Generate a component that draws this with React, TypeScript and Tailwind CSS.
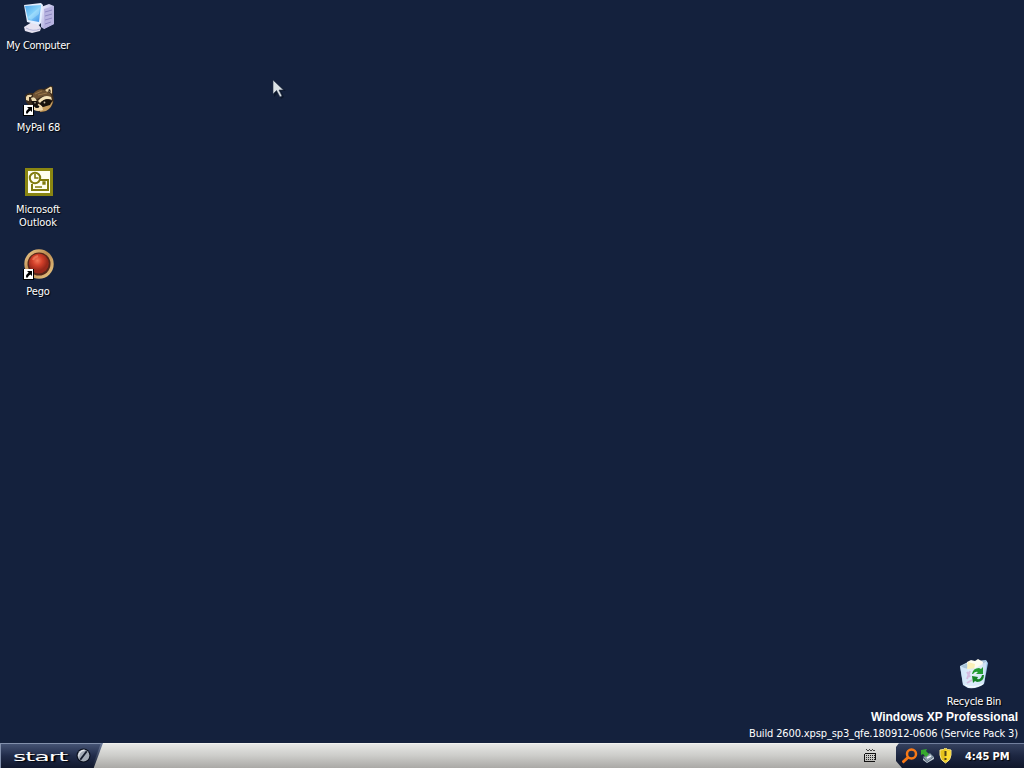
import React from "react";

const ui = "font-['DejaVu_Sans_Condensed','DejaVu_Sans',sans-serif] [font-stretch:condensed]";

function ShortcutArrow() {
  return (
    <g>
      <rect x="0" y="21" width="11" height="11" fill="#000" />
      <rect x="1" y="21" width="9" height="10" fill="#fff" />
      <path d="M4 23h5v5L7.4 26.4Q5 27.6 4.8 29.5H3Q2.8 26.5 5.6 24.6Z" fill="#000" />
    </g>
  );
}

function ComputerIcon() {
  return (
    <svg width="32" height="32" viewBox="0 0 32 32">
      <defs>
        <linearGradient id="screen" x1="0" y1="0" x2="1" y2="1">
          <stop offset="0" stopColor="#4ba6ec" />
          <stop offset=".5" stopColor="#86d2fb" />
          <stop offset="1" stopColor="#3b8ce4" />
        </linearGradient>
        <linearGradient id="tower" x1="0" y1="0" x2="1" y2="1">
          <stop offset="0" stopColor="#f3f3ff" />
          <stop offset="1" stopColor="#8c8dce" />
        </linearGradient>
      </defs>
      <path d="M18 5 26 2 31 4V22L21 27 18 25Z" fill="url(#tower)" />
      <path d="M21 7 31 4V22L21 27Z" fill="#b7b3e0" />
      <path d="m22 10 7-2M22 14l7-2M22 18l7-2M22 22l6-2" stroke="#8d89c2" />
      <path d="M9 20 15 22 18 26 17 29 9 31 2 29 1 25Z" fill="#e6e3f1" />
      <path d="M3 26q7 4 14 1" stroke="#b5b5d9" fill="none" />
      <path d="M1 3 18 1 20 3 18 21 16 23 4 20Z" fill="#e4efff" />
      <path d="M2 4 18 3 16 20 5 18Z" fill="url(#screen)" />
      <path d="M5 15 17 5 16 12 8 18Z" fill="#c5f0ff" opacity=".35" />
    </svg>
  );
}

function RaccoonIcon() {
  return (
    <svg width="32" height="32" viewBox="0 0 32 32">
      <path d="M2 13Q2 10 6 9L11 9Q15 4 21 5L27 2Q30 1 30 4V11Q32 17 29 22Q24 29 16 28L8 24L3 18Z" fill="#3b2b1c" />
      <path d="M10 10Q15 4 21 6L27 9Q29 12 29 15Q23 10 18 13L14 15 10 13Z" fill="#6d5133" />
      <path d="M12 10 19 7M15 11 24 9" stroke="#987549" />
      <path d="m22 6 5-3q2-1 2 2v5l-2-2-1-1-2 1Z" fill="#eed6a6" />
      <path d="m25 6 2-1 1 3-2-1Z" fill="#322217" />
      <path d="M3 13q1-3 6-2l-1 2-2 0 0 4-3-1Z" fill="#ecd7ab" />
      <path d="M8 14q3-2 5 1l1 3-2-1-3 0Z" fill="#eddbb2" />
      <path d="M15 17Q21 10 28 13L29 16Q23 13 17 19Z" fill="#f5e2b9" />
      <path d="M18 23Q25 22 30 17Q29 24 23 27L17 28Z" fill="#c59c60" />
      <path d="M11 22Q15 18 19 22L20 26Q15 28 11 26Z" fill="#f1dab0" />
      <path d="M8 17 14 17 15 21 11 23ZM18 18Q23 13 29 17L27 21 20 23 17 20Z" fill="#17110d" />
      <circle cx="12" cy="18.8" r=".8" fill="#c8bda3" />
      <circle cx="21.5" cy="18.5" r=".9" fill="#c8bda3" />
      <ellipse cx="14" cy="22.5" rx="2.2" ry="1.6" fill="#110e0c" />
      <ShortcutArrow />
    </svg>
  );
}

function OutlookIcon() {
  return (
    <svg width="32" height="32" viewBox="0 0 32 32" fill="none">
      <rect x="2" y="2" width="28" height="28" fill="#8a8611" />
      <rect x="5" y="5" width="22" height="22" fill="#fffff0" />
      <path d="M17 14h8v10H9v-6" stroke="#807b0d" strokeWidth="2" />
      <circle cx="12" cy="12" r="5.2" fill="#fffff0" stroke="#807b0d" strokeWidth="2" />
      <path d="M12 8v4h3.5" stroke="#807b0d" strokeWidth="1.6" />
      <path d="M20 16h2v2h-2zM12 21h7" fill="#807b0d" stroke="#807b0d" strokeWidth="1.3" />
    </svg>
  );
}

function PegoIcon() {
  return (
    <svg width="32" height="32" viewBox="0 0 32 32">
      <defs>
        <radialGradient id="ruby" cx=".43" cy=".35">
          <stop offset="0" stopColor="#f27657" />
          <stop offset=".5" stopColor="#d3402a" />
          <stop offset="1" stopColor="#98281a" />
        </radialGradient>
        <linearGradient id="gold" x1="0" y1="0" x2="1" y2="1">
          <stop offset="0" stopColor="#f1cf91" />
          <stop offset=".45" stopColor="#bb8b50" />
          <stop offset="1" stopColor="#edcb87" />
        </linearGradient>
      </defs>
      <circle cx="16" cy="16" r="14.7" fill="url(#gold)" />
      <circle cx="16" cy="16" r="11.5" fill="#57261a" />
      <circle cx="15.8" cy="15.5" r="10" fill="url(#ruby)" />
      <path d="M10 12q1-3 5-4" stroke="#ff9d79" strokeWidth="2" fill="none" opacity=".45" />
      <ShortcutArrow />
    </svg>
  );
}

function RecycleIcon() {
  return (
    <svg width="32" height="32" viewBox="0 1 32 32">
      <defs>
        <linearGradient id="bin">
          <stop offset="0" stopColor="#b7d6ef" />
          <stop offset=".4" stopColor="#edf7ff" />
          <stop offset=".75" stopColor="#cbe1f0" />
          <stop offset="1" stopColor="#8ebee4" />
        </linearGradient>
      </defs>
      <path d="M1 9 9 5 27 3 29 6 25 27Q19 32 9 31L4 28Z" fill="url(#bin)" />
      <path d="M2 9 9 6 27 4 24 11 16 13 4 11Z" fill="#a9c4d9" />
      <path d="m8 5 4-2 4 1 3-2 5 3-1 10-8 5-6-7Z" fill="#fffdf1" />
      <path d="m9 5 7 2-1 6-7-1Z" fill="#fbf0b8" />
      <path d="m1 9 7 3 9-1 11-7-3 22q-7 6-17 4l-4-3Z" fill="#d8eaf9" opacity=".75" />
      <path d="m8 15 3 5M11 14l-3 8M8 26l5-3" stroke="#d4a9d5" strokeWidth="2" opacity=".7" />
      <path d="M6 28q8 4 18-1" stroke="#fff" fill="none" opacity=".8" />
      <path d="M13 17q1-6 7-6l2 1 2-2v7h-7l2-2q-3-1-5 2Z" fill="#239b32" />
      <path d="m23 18 2 0q0 7-7 7l-2-1-2 2-1-7 6 1-1 2q4 1 5-4Z" fill="#168326" />
    </svg>
  );
}

function DesktopItem({ icon, children }: { icon: React.ReactNode; children: React.ReactNode }) {
  return (
    <div className="flex h-[82px] w-[76px] flex-col items-center gap-[5px] pt-[2px]">
      <div className="ml-px h-8 w-8">{icon}</div>
      <div className={`${ui} text-center text-[11px] leading-[13px] whitespace-nowrap text-white [text-shadow:1px_1px_1px_#000]`}>{children}</div>
    </div>
  );
}

function Taskbar() {
  return (
    <footer className="flex h-[25px] bg-linear-to-b from-[#e9eae8] via-[#cdcdca] to-[#aaa9a6]">
      <div className="h-full w-[103px] bg-linear-to-b from-[#7180a0] to-[#10172b] [clip-path:polygon(0_0,100%_0,91%_100%,0_100%)]">
        <div className="flex h-full w-[102px] items-center border-t border-l border-[#8290ac] bg-linear-to-b from-[#455374] via-[#202b49] to-[#11182d] pl-[12px] [clip-path:polygon(0_0,99%_0,90%_100%,0_100%)]">
          <div className="w-[57px] pb-[3px]">
            <span className="inline-block origin-left scale-x-[1.95] font-['DejaVu_Sans',sans-serif] text-[13px] leading-[18px] tracking-[-0.5px] text-white [text-shadow:1px_1px_1px_#000]">start</span>
          </div>
          <svg className="mb-[2px] ml-[6px]" width="15" height="15" viewBox="0 0 14 14">
            <circle cx="7" cy="7" r="6.5" fill="#080d1a" />
            <circle cx="7" cy="7" r="5.5" fill="#a4abb6" />
            <path d="M4 11 10 3" stroke="#141b2c" strokeWidth="1.8" />
            <path d="M2.5 8Q2.5 3 8 2" stroke="#e6e9ef" fill="none" />
          </svg>
        </div>
      </div>
      <div className="flex-1 border-t border-[#f2f2ef]" />
      <svg className="mt-[5px] mr-[19px]" width="15" height="15" viewBox="0 0 15 15" shapeRendering="crispEdges">
        <path d="M4 1h1v1H4zM5 2h2v1H5zM7 1h1v1H7zM8 2h2v1H8zM10 1h1v1h-1zM11 2h2v1h-2z" fill="#444" />
        <path d="M3 5h11v1H3zM2 6h1v7H2zM13 6h1v6h-1zM2 13h11v1H2z" fill="#111" />
        <path d="M4 7.5h9M4 9.5h9M4 11.5h9" stroke="#222" strokeDasharray="1 1" />
      </svg>
      <div className="flex h-full w-[128px] items-center border-t border-[#727f9d] bg-linear-to-b from-[#35415f] via-[#1c2641] to-[#10172b] [clip-path:polygon(3px_0,100%_0,100%_100%,6px_100%,0_72%,0_4px)]">
        <div className="flex w-[60px] items-center gap-[2px] pb-px pl-[6px]">
          <svg width="16" height="16" viewBox="0 0 16 16">
            <circle cx="9.5" cy="6" r="4.5" fill="none" stroke="#f87916" strokeWidth="2.5" />
            <path d="m6.5 9-6 5.5" stroke="#f87916" strokeWidth="3" />
          </svg>
          <svg width="16" height="16" viewBox="0 0 16 16">
            <path d="m3 9 7-4 4 4-7 5Z" fill="#8c9cab" stroke="#46596b" />
            <path d="m3 10 4 4 7-5v2l-7 4-4-3Z" fill="#c1ccd4" />
            <path d="m1 2 6-1-1 2 3 3-3 3-3-3-2 1Z" fill="#36a92e" />
            <path d="m7 10 4-2" stroke="#eff6f8" strokeWidth="1.5" />
          </svg>
          <svg width="16" height="16" viewBox="0 0 16 16">
            <path d="M7.5 0Q9 2 13 2v5q0 5-5.5 8Q2 12 2 7V2q4 0 5.5-2Z" fill="#e6c21b" stroke="#f7e694" />
            <path d="M7.5 1q2 2 5 2v4q0 4-5 7Z" fill="#ffdd32" />
            <path d="M7.5 3v5M7.5 10v2" stroke="#504019" strokeWidth="2" />
          </svg>
        </div>
        <span className="ml-[9px] font-['DejaVu_Sans_Condensed','DejaVu_Sans',sans-serif] text-[11px] leading-[13px] font-bold tracking-[-0.1px] whitespace-nowrap text-white [font-stretch:condensed] [text-shadow:1px_1px_1px_#000]">4:45 PM</span>
      </div>
    </footer>
  );
}

export default function App() {
  return (
    <div className="relative flex h-[768px] w-[1024px] flex-col overflow-hidden bg-[#14213d]">
      <main className="flex flex-1 justify-between">
        <div className="flex flex-col">
          <DesktopItem icon={<ComputerIcon />}><span className="tracking-[-0.3px]">My Computer</span></DesktopItem>
          <DesktopItem icon={<RaccoonIcon />}><span className="ml-px tracking-[-0.1px]">MyPal 68</span></DesktopItem>
          <DesktopItem icon={<OutlookIcon />}><span className="tracking-[-0.1px]">Microsoft<br />Outlook</span></DesktopItem>
          <DesktopItem icon={<PegoIcon />}><span className="tracking-[-0.1px]">Pego</span></DesktopItem>
        </div>
        <div className="flex flex-col items-end justify-end pr-[6px] text-white">
          <div className="mr-[6px] h-[54px]">
            <DesktopItem icon={<RecycleIcon />}><span className="tracking-[-0.25px]">Recycle Bin</span></DesktopItem>
          </div>
          <div className="h-[15px] font-['Liberation_Sans',sans-serif] text-[12px] leading-[15px] font-bold whitespace-nowrap">Windows XP Professional</div>
          <div className={`${ui} mt-[1px] mb-[2px] h-[15px] text-[11px] leading-[15px] tracking-[-0.13px] whitespace-nowrap`}>Build 2600.xpsp_sp3_qfe.180912-0606 (Service Pack 3)</div>
        </div>
      </main>
      <Taskbar />
      <svg className="absolute top-[79px] left-[272px]" width="16" height="22" viewBox="0 0 16 22">
        <path d="M2 2v16l4-4 3 6 3-2-3-6h5Z" fill="#07101f" opacity=".6" />
        <path d="M1 1v14l3.5-3.5L8 18l2-1-3-6h4.5Z" fill="#dce2e6" stroke="#253047" strokeWidth=".6" />
      </svg>
    </div>
  );
}
